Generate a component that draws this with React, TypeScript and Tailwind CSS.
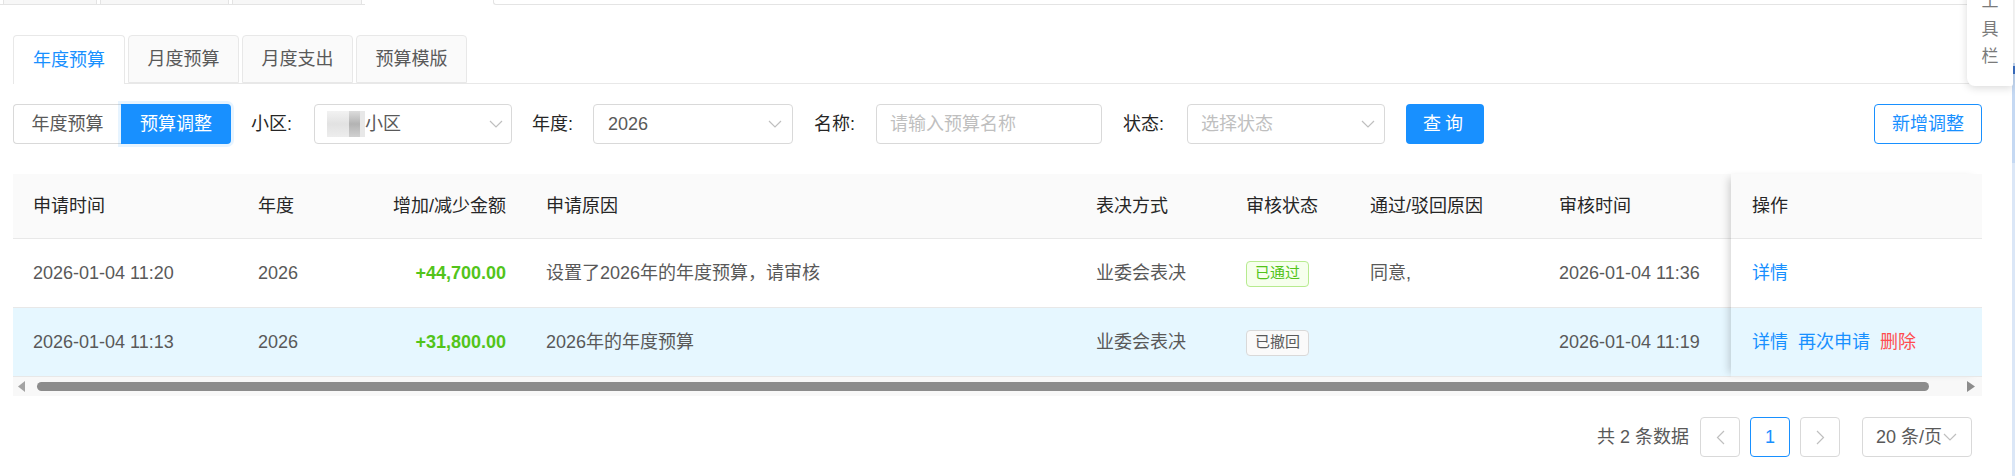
import React from "react";

const Chevron = ({ className = "" }: { className?: string }) => (
  <svg width="14" height="8" viewBox="0 0 14 8" className={className} fill="none">
    <polyline points="1,1 7,7 13,1" stroke="#bfbfbf" strokeWidth="1.2" />
  </svg>
);

const Arrow = ({ dir }: { dir: "l" | "r" }) => (
  <svg width="9" height="15" viewBox="0 0 9 15" fill="none">
    {dir === "l" ? (
      <polyline points="8,1 1.5,7.5 8,14" stroke="#bfbfbf" strokeWidth="1.2" />
    ) : (
      <polyline points="1,1 7.5,7.5 1,14" stroke="#bfbfbf" strokeWidth="1.2" />
    )}
  </svg>
);

const cols = [
  { w: "w-[225px]", title: "申请时间" },
  { w: "w-[128px]", title: "年度" },
  { w: "w-[160px]", title: "增加/减少金额", right: true },
  { w: "w-[550px]", title: "申请原因" },
  { w: "w-[150px]", title: "表决方式" },
  { w: "w-[124px]", title: "审核状态" },
  { w: "w-[189px]", title: "通过/驳回原因" },
  { w: "w-[192px]", title: "审核时间" },
];

type Row = {
  time: string;
  year: string;
  amount: string;
  reason: string;
  method: string;
  status: "pass" | "revoked";
  note: string;
  audit: string;
  ops: string[];
  bg: string;
};

const rows: Row[] = [
  {
    time: "2026-01-04 11:20",
    year: "2026",
    amount: "+44,700.00",
    reason: "设置了2026年的年度预算，请审核",
    method: "业委会表决",
    status: "pass",
    note: "同意,",
    audit: "2026-01-04 11:36",
    ops: ["详情"],
    bg: "bg-white",
  },
  {
    time: "2026-01-04 11:13",
    year: "2026",
    amount: "+31,800.00",
    reason: "2026年的年度预算",
    method: "业委会表决",
    status: "revoked",
    note: "",
    audit: "2026-01-04 11:19",
    ops: ["详情", "再次申请", "删除"],
    bg: "bg-[#e6f7ff]",
  },
];

export default function App() {
  return (
    <div className="relative w-[2015px] h-[476px] overflow-hidden bg-white font-['Liberation_Sans','Noto_Sans_CJK_SC',sans-serif] text-[18px] text-[#595959]">
      {/* cut-off top strip */}
      <div className="flex h-[5px] items-stretch">
        <div className="flex w-[365px] gap-[3px] border-b border-[#e4e4e4] pl-[3px]">
          <div className="w-[94px] border-x border-[#e4e4e4] bg-[#f7f7f7]" />
          <div className="w-[129px] border-x border-[#e4e4e4] bg-[#f7f7f7]" />
          <div className="w-[130px] border-x border-[#e4e4e4] bg-[#f7f7f7]" />
        </div>
        <div className="ml-[128px] w-[1519px] rounded-bl-[3px] border-b border-l border-[#e4e4e4]" />
      </div>

      <div className="w-[1982px] pl-[13px]">
        {/* Tabs */}
        <div className="mt-[30px] flex h-[49px] gap-[3px] border-b border-[#e8e8e8]">
          {["年度预算", "月度预算", "月度支出", "预算模版"].map((t, i) => (
            <div
              key={t}
              className={
                i === 0
                  ? "relative -mb-px flex h-[49px] w-[112px] items-center justify-center rounded-t-[4px] border border-b-0 border-[#e8e8e8] bg-white text-[#1890ff]"
                  : "flex h-[48px] w-[111px] items-center justify-center rounded-t-[4px] border border-[#e8e8e8] bg-[#fafafa] text-[#595959]"
              }
            >
              {t}
            </div>
          ))}
        </div>

        {/* Filter row */}
        <div className="mt-[20px] flex h-[40px] items-center">
          <div className="flex h-[40px]">
            <div className="flex w-[108px] items-center justify-center rounded-l-[4px] border border-r-0 border-[#d9d9d9] text-[#595959]">
              年度预算
            </div>
            <div className="flex w-[110px] items-center justify-center rounded-r-[4px] bg-[#1890ff] text-white shadow-[0_0_0_3px_rgba(24,144,255,0.1)]">
              预算调整
            </div>
          </div>

          <span className="ml-[20px] text-[#262626]">小区:</span>
          <div className="ml-[22px] flex h-[40px] w-[198px] items-center rounded-[4px] border border-[#d9d9d9] pl-[12px] pr-[8px]">
            <div className="flex h-[26px] items-stretch">
              <div className="w-[22px] bg-[linear-gradient(#f2f2f2,#e2e2e2,#ededed)]" />
              <div className="w-[11px] bg-[linear-gradient(#dcdcdc,#b3b3b3,#d0d0d0)]" />
              <div className="w-[5px] bg-[#e8e8e8]" />
            </div>
            <span className="text-[#595959]">小区</span>
            <Chevron className="ml-auto" />
          </div>

          <span className="ml-[20px] text-[#262626]">年度:</span>
          <div className="ml-[20px] flex h-[40px] w-[200px] items-center rounded-[4px] border border-[#d9d9d9] pl-[14px] pr-[10px]">
            <span>2026</span>
            <Chevron className="ml-auto" />
          </div>

          <span className="ml-[21px] text-[#262626]">名称:</span>
          <div className="ml-[21px] flex h-[40px] w-[226px] items-center rounded-[4px] border border-[#d9d9d9] pl-[13px]">
            <span className="text-[#bfbfbf]">请输入预算名称</span>
          </div>

          <span className="ml-[21px] text-[#262626]">状态:</span>
          <div className="ml-[23px] flex h-[40px] w-[198px] items-center rounded-[4px] border border-[#d9d9d9] pl-[13px] pr-[9px]">
            <span className="text-[#bfbfbf]">选择状态</span>
            <Chevron className="ml-auto" />
          </div>

          <div className="ml-[21px] flex h-[40px] w-[78px] items-center justify-center rounded-[4px] bg-[#1890ff] text-white tracking-[4px]">
            查询
          </div>

          <div className="ml-auto flex h-[40px] w-[108px] items-center justify-center rounded-[4px] border border-[#1890ff] text-[#1890ff]">
            新增调整
          </div>
        </div>

        {/* Table */}
        <div className="mt-[30px]">
          <div className="flex">
            <div className="flex-1">
              {/* header */}
              <div className="flex h-[65px] items-center border-b border-[#e8e8e8] bg-[#fafafa] text-[#262626]">
                {cols.map((c) => (
                  <div
                    key={c.title}
                    className={`${c.w} shrink-0 whitespace-nowrap ${c.right ? "pr-[20px] text-right" : "pl-[20px]"}`}
                  >
                    {c.title}
                  </div>
                ))}
              </div>
              {rows.map((r, i) => (
                <div key={i} className={`flex h-[69px] items-center border-b border-[#e8e8e8] ${r.bg}`}>
                  <div className="w-[225px] shrink-0 pl-[20px]">{r.time}</div>
                  <div className="w-[128px] shrink-0 pl-[20px]">{r.year}</div>
                  <div className="w-[160px] shrink-0 pr-[20px] text-right font-bold text-[#52c41a]">{r.amount}</div>
                  <div className="w-[550px] shrink-0 pl-[20px]">{r.reason}</div>
                  <div className="w-[150px] shrink-0 pl-[20px]">{r.method}</div>
                  <div className="w-[124px] shrink-0 pl-[20px]">
                    {r.status === "pass" ? (
                      <span className="inline-flex h-[26px] w-[63px] items-center justify-center rounded-[4px] border border-[#b7eb8f] bg-[#f6ffed] text-[15px] text-[#52c41a]">
                        已通过
                      </span>
                    ) : (
                      <span className="inline-flex h-[26px] w-[63px] items-center justify-center rounded-[4px] border border-[#d9d9d9] bg-[#fafafa] text-[15px] text-[#595959]">
                        已撤回
                      </span>
                    )}
                  </div>
                  <div className="w-[189px] shrink-0 pl-[20px]">{r.note}</div>
                  <div className="w-[192px] shrink-0 pl-[20px]">{r.audit}</div>
                </div>
              ))}
            </div>
            {/* fixed right column */}
            <div className="relative z-10 w-[251px] shrink-0 shadow-[-6px_0_8px_-4px_rgba(0,0,0,0.18)]">
              <div className="flex h-[65px] items-center border-b border-[#e8e8e8] bg-[#fafafa] pl-[21px] text-[#262626]">
                操作
              </div>
              {rows.map((r, i) => (
                <div key={i} className={`flex h-[69px] items-center gap-[10px] border-b border-[#e8e8e8] pl-[21px] ${r.bg}`}>
                  {r.ops.map((o) => (
                    <span key={o} className={o === "删除" ? "text-[#ff4d4f]" : "text-[#1890ff]"}>
                      {o}
                    </span>
                  ))}
                </div>
              ))}
            </div>
          </div>
          {/* horizontal scrollbar */}
          <div className="flex h-[19px] items-center bg-[#f8f8f8]">
            <svg width="8" height="11" viewBox="0 0 8 11" className="ml-[5px]">
              <polygon points="7,0 7,11 0,5.5" fill="#a3a3a3" />
            </svg>
            <div className="ml-[11px] h-[9px] w-[1892px] rounded-full bg-[#8c8c8c]" />
            <svg width="8" height="11" viewBox="0 0 8 11" className="ml-[38px]">
              <polygon points="0,0 0,11 8,5.5" fill="#8c8c8c" />
            </svg>
          </div>
        </div>

        {/* Pagination */}
        <div className="mt-[21px] flex h-[40px] items-center justify-end pr-[10px]">
          <span className="text-[#595959]">共 2 条数据</span>
          <div className="ml-[11px] flex h-[40px] w-[40px] items-center justify-center rounded-[4px] border border-[#d9d9d9]">
            <Arrow dir="l" />
          </div>
          <div className="ml-[10px] flex h-[40px] w-[40px] items-center justify-center rounded-[4px] border border-[#1890ff] text-[#1890ff]">
            1
          </div>
          <div className="ml-[10px] flex h-[40px] w-[40px] items-center justify-center rounded-[4px] border border-[#d9d9d9]">
            <Arrow dir="r" />
          </div>
          <div className="ml-[22px] flex h-[40px] w-[110px] items-center rounded-[4px] border border-[#d9d9d9] pl-[13px]">
            <span>20 条/页</span>
            <Chevron className="ml-[1px]" />
          </div>
        </div>
      </div>

      {/* right edge element */}
      <div className="absolute right-0 top-[63px] bottom-0 w-[3px] bg-[#dbe7f7]">
        <div className="h-[100px] w-full bg-[#c5d9f3]" />
      </div>
      <div className="absolute right-0 top-[66px] h-[8px] w-[3px] bg-[#3a6fc4]" />

      {/* toolbar */}
      <div className="absolute left-[1967px] top-[-14px] z-20 flex h-[100px] w-[46px] flex-col items-center rounded-bl-[8px] rounded-br-[2px] bg-white pt-[2px] text-[17px] leading-[27.5px] text-[#7a7a7a] shadow-[0_2px_8px_rgba(0,0,0,0.15)]">
        <span>工</span>
        <span>具</span>
        <span>栏</span>
      </div>
    </div>
  );
}
